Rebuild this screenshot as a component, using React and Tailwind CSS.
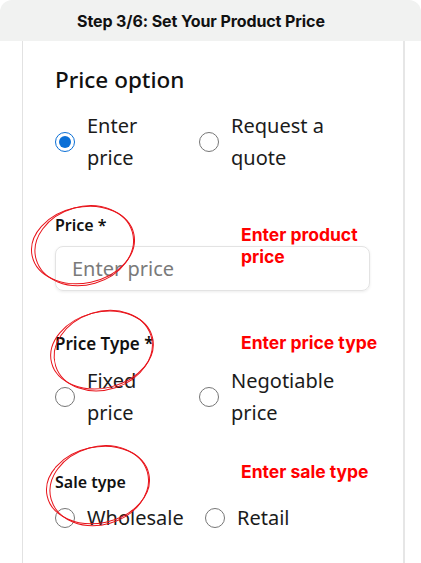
import React from "react";

const uiFont = { fontFamily: '"Noto Sans", "Open Sans", sans-serif' };
const noteFont = { fontFamily: "Inter, sans-serif" };

function Radio({ lines, checked, width }) {
  return (
    <label className={`flex items-center gap-3 ${width}`}>
      <input
        type="radio"
        defaultChecked={checked}
        className="w-5 h-5 m-0 shrink-0 accent-[#0a6fd6]"
      />
      <span className="text-[20px] leading-[32px] text-[#1b1b1b] whitespace-nowrap">
        {lines.map((l, i) => (
          <span key={i} className="block">
            {l}
          </span>
        ))}
      </span>
    </label>
  );
}

function Scribble({ cx, cy, rx, ry, rot }) {
  return (
    <g fill="none" stroke="#e8141b" strokeWidth="1">
      <ellipse cx={cx} cy={cy} rx={rx} ry={ry} transform={`rotate(${rot} ${cx} ${cy})`} />
      <ellipse
        cx={cx + 1}
        cy={cy + 1}
        rx={rx - 2}
        ry={ry + 1}
        transform={`rotate(${rot - 4} ${cx} ${cy})`}
      />
    </g>
  );
}

export default function App() {
  return (
    <div className="relative w-[421px] h-[563px] bg-white overflow-hidden">
      {/* Header */}
      <div className="h-[41px] bg-[#f1f2f1] rounded-t-[12px] flex items-center pl-[77px]">
        <h1 className="text-[16px] font-bold text-[#111] tracking-[-0.1px]" style={noteFont}>
          Step 3/6: Set Your Product Price
        </h1>
      </div>

      {/* Card */}
      <div
        className="ml-[22px] w-[383px] h-[522px] border-l border-l-[#e2e2e2] border-r-2 border-r-[#e6e6e6] pl-[32px] pt-[24px]"
        style={uiFont}
      >
        <h2 className="text-[22.5px] leading-[30px] font-medium text-[#111]">Price option</h2>
        <div className="flex mt-[15px]">
          <Radio lines={["Enter", "price"]} checked width="w-[144px]" />
          <Radio lines={["Request a", "quote"]} width="w-[130px]" />
        </div>

        <div className="mt-[39px] text-[16px] leading-[24px] font-semibold text-[#111]">Price *</div>
        <input
          placeholder="Enter price"
          className="mt-[9px] w-[315px] h-[45px] rounded-[8px] border border-[#e3e3e3] shadow-[0_1px_3px_rgba(0,0,0,0.08)] px-[16px] text-[20px] placeholder:text-[#7a7a7a] outline-none"
        />

        <div className="mt-[41px] text-[17px] leading-[24px] font-semibold text-[#111]">Price Type *</div>
        <div className="flex mt-[9px]">
          <Radio lines={["Fixed", "price"]} width="w-[144px]" />
          <Radio lines={["Negotiable", "price"]} width="w-[130px]" />
        </div>

        <div className="mt-[41px] text-[16px] leading-[24px] font-semibold text-[#111]">Sale type</div>
        <div className="flex mt-[8px]">
          <Radio lines={["Wholesale"]} width="w-[150px]" />
          <Radio lines={["Retail"]} width="w-[100px]" />
        </div>
      </div>

      {/* Annotations */}
      <div
        className="absolute left-[241px] top-[224px] text-[17.5px] leading-[22px] font-bold text-[#ff0000]"
        style={noteFont}
      >
        Enter product
        <br />
        price
      </div>
      <div
        className="absolute left-[241px] top-[332px] text-[17.5px] leading-[22px] font-bold text-[#ff0000]"
        style={noteFont}
      >
        Enter price type
      </div>
      <div
        className="absolute left-[241px] top-[461px] text-[17.5px] leading-[22px] font-bold text-[#ff0000]"
        style={noteFont}
      >
        Enter sale type
      </div>
      <svg className="absolute inset-0 pointer-events-none" width="421" height="563">
        <Scribble cx={83} cy={245} rx={52} ry={38} rot={-12} />
        <Scribble cx={102} cy={350} rx={52} ry={38} rot={-14} />
        <Scribble cx={98} cy={485} rx={52} ry={38} rot={-12} />
      </svg>
    </div>
  );
}
